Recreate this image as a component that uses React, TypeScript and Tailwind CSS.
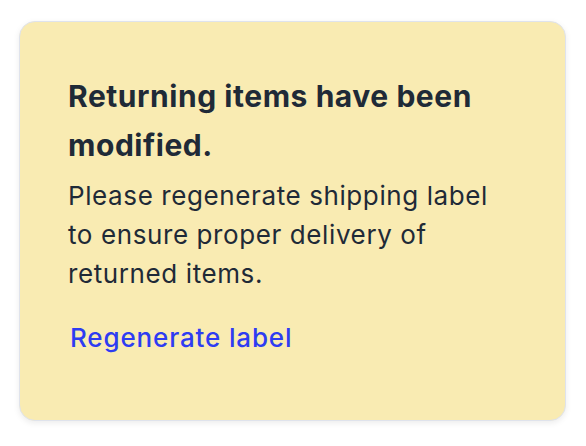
export default function App() {
  return (
    <div className="min-h-screen bg-white p-[19px] pt-[21px] font-['Inter',sans-serif]">
      <div className="w-[547px] h-[400px] rounded-[16px] border border-[#dfe3ec] bg-[#f9ebb2] shadow-[0_2px_6px_rgba(0,0,0,0.08)] pl-[48px] pr-[40px] pt-[50px]">
        <h2 className="max-w-[440px] text-[30px] leading-[49px] font-bold tracking-[0.55px] text-[#1f2a37]">
          Returning items have been modified.
        </h2>
        <p className="mt-[6px] max-w-[440px] text-[26px] leading-[39px] tracking-[0.6px] text-[#1f2a37]">
          Please regenerate shipping label to ensure proper delivery of returned items.
        </p>
        <button className="mt-[25px] ml-[2px] text-[26px] leading-[39px] font-medium tracking-[0.85px] text-[#2e3cf2]">
          Regenerate label
        </button>
      </div>
    </div>
  )
}
